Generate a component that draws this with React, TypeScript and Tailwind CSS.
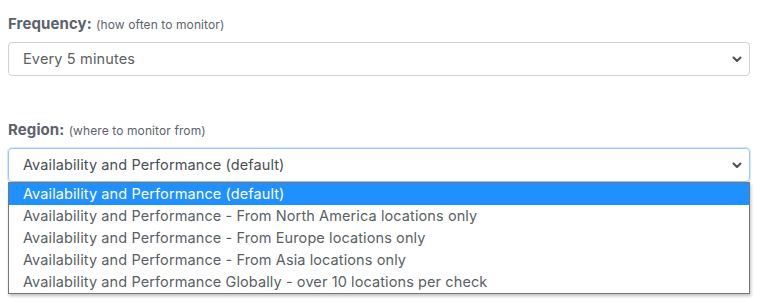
const regions = [
  "Availability and Performance (default)",
  "Availability and Performance - From North America locations only",
  "Availability and Performance - From Europe locations only",
  "Availability and Performance - From Asia locations only",
  "Availability and Performance Globally - over 10 locations per check",
];

function Chevron() {
  return (
    <svg width="10" height="8" viewBox="0 0 10 8" className="shrink-0">
      <path d="M1.5 2.5 L5 6 L8.5 2.5" fill="none" stroke="#4a4f55" strokeWidth="2" strokeLinecap="round" strokeLinejoin="round" />
    </svg>
  );
}

export default function App() {
  return (
    <div className="min-h-[303px] w-[761px] bg-white px-2 pt-[14px] font-['Inter',sans-serif] text-[#5b636b]">
      <div className="h-5 text-[15px] leading-5">
        <span className="font-bold tracking-[0.1px]">Frequency:</span>{" "}
        <span className="text-[12px] tracking-[0.1px]">(how often to monitor)</span>
      </div>
      <div className="mt-2 flex h-[34px] w-[742px] items-center justify-between rounded border border-[#cfd3d7] pl-[14px] pr-[7px] text-[14.5px] tracking-[0.15px] text-[#5a5f64]">
        <span>Every 5 minutes</span>
        <Chevron />
      </div>

      <div className="mt-[44px] h-5 text-[15px] leading-5">
        <span className="font-bold tracking-[0.1px]">Region:</span>{" "}
        <span className="text-[12px] tracking-[0.1px]">(where to monitor from)</span>
      </div>
      <div className="relative mt-2 w-[742px]">
        <div className="flex h-[34px] items-center justify-between rounded border border-[#9ec5f5] pl-[14px] pr-[7px] text-[14.5px] tracking-[0.1px] text-[#4a4f55] shadow-[0_0_0_1px_rgba(128,189,255,0.35)]">
          <span>Availability and Performance (default)</span>
          <Chevron />
        </div>
        <div className="absolute left-0 top-[34px] w-[742px] border border-[#767676] bg-white shadow-[1px_2px_3px_rgba(0,0,0,0.25)]">
          {regions.map((r, i) => (
            <div
              key={r}
              className={`flex h-[22px] items-center pl-[14px] text-[14.5px] tracking-[0.1px] ${
                i === 0 ? "bg-[#1e90ff] text-white" : "text-[#5a5f64]"
              }`}
            >
              {r}
            </div>
          ))}
        </div>
      </div>
    </div>
  );
}
